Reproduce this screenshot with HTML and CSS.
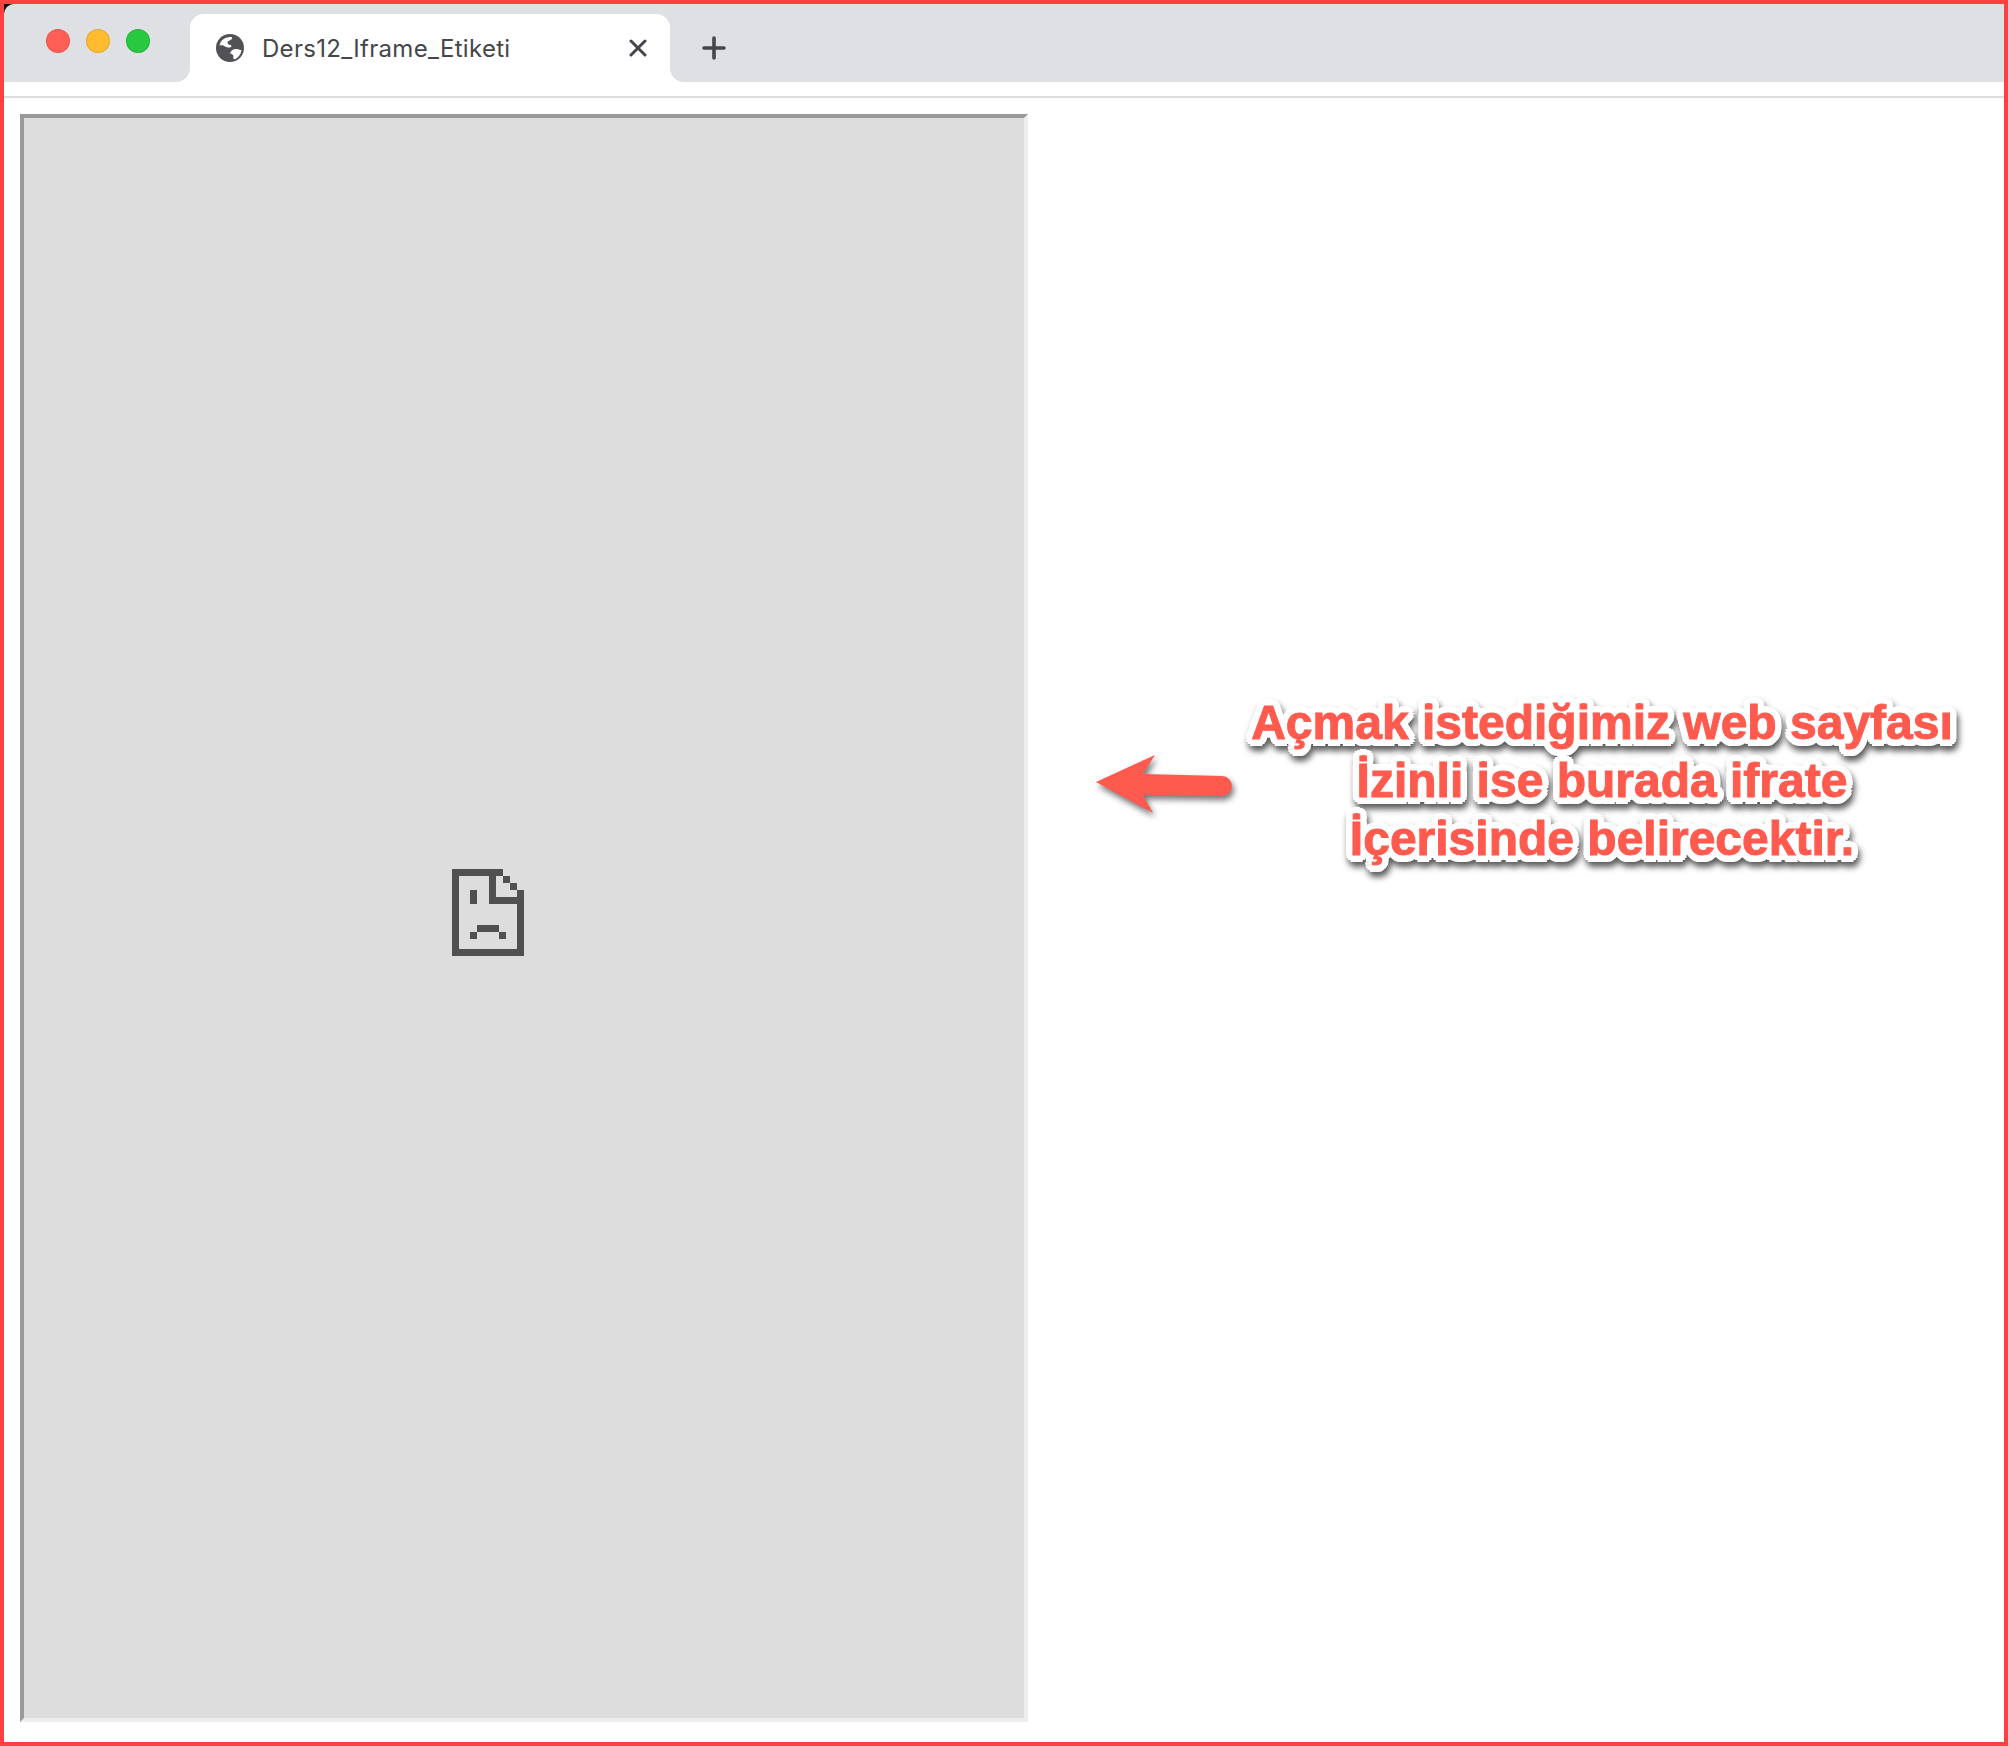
FILE: index.html
```html
<!DOCTYPE html>
<html lang="en">
<head>
    <meta charset="UTF-8">
    <title>Ders12_Iframe_Etiketi</title>
    <link rel="stylesheet" href="styles.css">
</head>
<body>
    <div class="window">
        <div class="tab-bar">
            <div class="traffic-lights">
                <span class="light red"></span>
                <span class="light yellow"></span>
                <span class="light green"></span>
            </div>
            <div class="tab-slot">
                <div class="tab">
                    <svg class="globe" width="28" height="28" viewBox="0 0 28 28">
                        <circle cx="14" cy="14" r="14" fill="#505256"/>
                        <path d="M3.500 11.500C4 8 6.500 5 10 3.800 12 3.100 14 2.800 15.500 3c1 .6.800 2-.5 2.800-2 1-3.500 1.500-3.500 3.200 0 1.200 1.500 1.500 3 2 1.200.5 1.200 2 0 2.300-2 .5-4 .2-5.500-.8-1.500-1-3-1.500-5.500-1z" fill="#fff"/>
                        <path d="M14.500 18c1.500-2 3.500-3.300 6-3 2 .3 3.500 1 5 1-.3 3-2 6-4.500 8-1 .8-2.500 1.500-3.200 1-.8-.6-.3-2.200-.5-3.200-.2-1.300-1.500-1.500-2.500-2-.7-.4-.8-1.200-.3-1.800z" fill="#fff"/>
                    </svg>
                    <span class="tab-title">Ders12_Iframe_Etiketi</span>
                    <svg class="tab-close" width="18" height="18" viewBox="0 0 18 18">
                        <path d="M2 2l14 14M16 2L2 16" stroke="#44464b" stroke-width="3" stroke-linecap="round"/>
                    </svg>
                </div>
            </div>
            <div class="tab-rest">
                <svg class="new-tab" width="24" height="24" viewBox="0 0 24 24">
                    <path d="M12 2v20M2 12h20" stroke="#44464b" stroke-width="3.600" stroke-linecap="round"/>
                </svg>
            </div>
        </div>

        <div class="content">
            <div class="frame">
                <!-- broken page icon -->
                <svg class="sad-page" width="72" height="87" viewBox="0 0 72 87">
                    <path d="M0 0h51v7H44v21h28v59H0zM7 7v73h58V35H37V7zM51 7h7v7h-7zM58 14h7v7h-7zM65 21h7v7h-7zM18 21h7v14h-7zM25 56h22v7H25zM18 63h7v7h-7zM47 63h7v7h-7z" fill="#505050" fill-rule="evenodd"/>
                </svg>
            </div>
            <svg class="arrow" width="150" height="72" viewBox="0 0 150 72">
                <path d="M6 32L65 5 53 24 132 26A10 10 0 0 1 132 46L53 45 63 63z" fill="#ff5a4e"/>
            </svg>
            <p class="note">Açmak istediğimiz web sayfası<br>İzinli ise burada ifrate<br>İçerisinde belirecektir.</p>
        </div>
    </div>
</body>
</html>
```

FILE: styles.css
```css
body {
    margin: 0;
    font-family: "Inter", "Liberation Sans", sans-serif;
    background-color: #fff;
}
.window {
    box-sizing: border-box;
    height: 1746px;
    border: 4px solid #ff4040;
    overflow: hidden;
}
.tab-bar {
    display: flex;
    align-items: flex-start;
    height: 92px;
    border-bottom: 2px solid #dcdcdc;
    background: linear-gradient(135deg, #111 7px, transparent 7px);
}
.traffic-lights {
    box-sizing: border-box;
    display: flex;
    gap: 16px;
    width: 186px;
    height: 78px;
    padding: 25px 0 0 42px;
    background-color: #dfe0e4;
    border-top-left-radius: 10px;
    border-bottom-right-radius: 14px;
}
.light {
    box-sizing: border-box;
    width: 24px;
    height: 24px;
    border-radius: 50%;
    border: 1px solid rgba(0, 0, 0, 0.1);
}
.red { background-color: #ff5f57; }
.yellow { background-color: #febc2e; }
.green { background-color: #28c840; }
.tab-slot {
    box-sizing: border-box;
    width: 480px;
    height: 78px;
    padding-top: 10px;
    background-color: #dfe0e4;
}
.tab {
    box-sizing: border-box;
    display: flex;
    align-items: center;
    height: 68px;
    padding: 0 23px 0 26px;
    background-color: #fff;
    border-radius: 14px 14px 0 0;
}
.tab-title {
    flex: 1;
    margin-left: 18px;
    font-size: 24px;
    letter-spacing: 0.3px;
    color: #44464b;
}
.tab-rest {
    box-sizing: border-box;
    flex: 1;
    height: 78px;
    padding: 32px 0 0 32px;
    background-color: #dfe0e4;
    border-bottom-left-radius: 14px;
}
.new-tab {
    display: block;
}
.content {
    display: flex;
    align-items: flex-start;
    padding: 16px;
}
.frame {
    box-sizing: border-box;
    flex: none;
    width: 1008px;
    height: 1608px;
    padding: 751px 0 0 428px;
    background-color: #ddd;
    border: 4px solid;
    border-color: #9a9a9a #eee #eee #9a9a9a;
}
.sad-page {
    display: block;
}
.arrow {
    flex: none;
    margin: 636px 0 0 62px;
    filter: drop-shadow(2px 4px 3px rgba(0, 0, 0, 0.55));
}
.note {
    flex: none;
    width: 760px;
    margin: 580px 0 0 -18px;
    font-family: "Liberation Sans", Arial, sans-serif;
    font-size: 48px;
    font-weight: bold;
    line-height: 58px;
    text-align: center;
    color: #ff5a4e;
    -webkit-text-stroke: 1px #ff5a4e;
    text-shadow: 7px 0 0 #fff, -7px 0 0 #fff, 0 7px 0 #fff, 0 -7px 0 #fff, 5px 5px 0 #fff, -5px 5px 0 #fff, 5px -5px 0 #fff, -5px -5px 0 #fff, 6.500px 2.700px 0 #fff, -6.500px 2.700px 0 #fff, 6.500px -2.700px 0 #fff, -6.500px -2.700px 0 #fff, 2.700px 6.500px 0 #fff, -2.700px 6.500px 0 #fff, 2.700px -6.500px 0 #fff, -2.700px -6.500px 0 #fff;
    filter: drop-shadow(2px 5px 3px rgba(0, 0, 0, 0.65));
}
```
